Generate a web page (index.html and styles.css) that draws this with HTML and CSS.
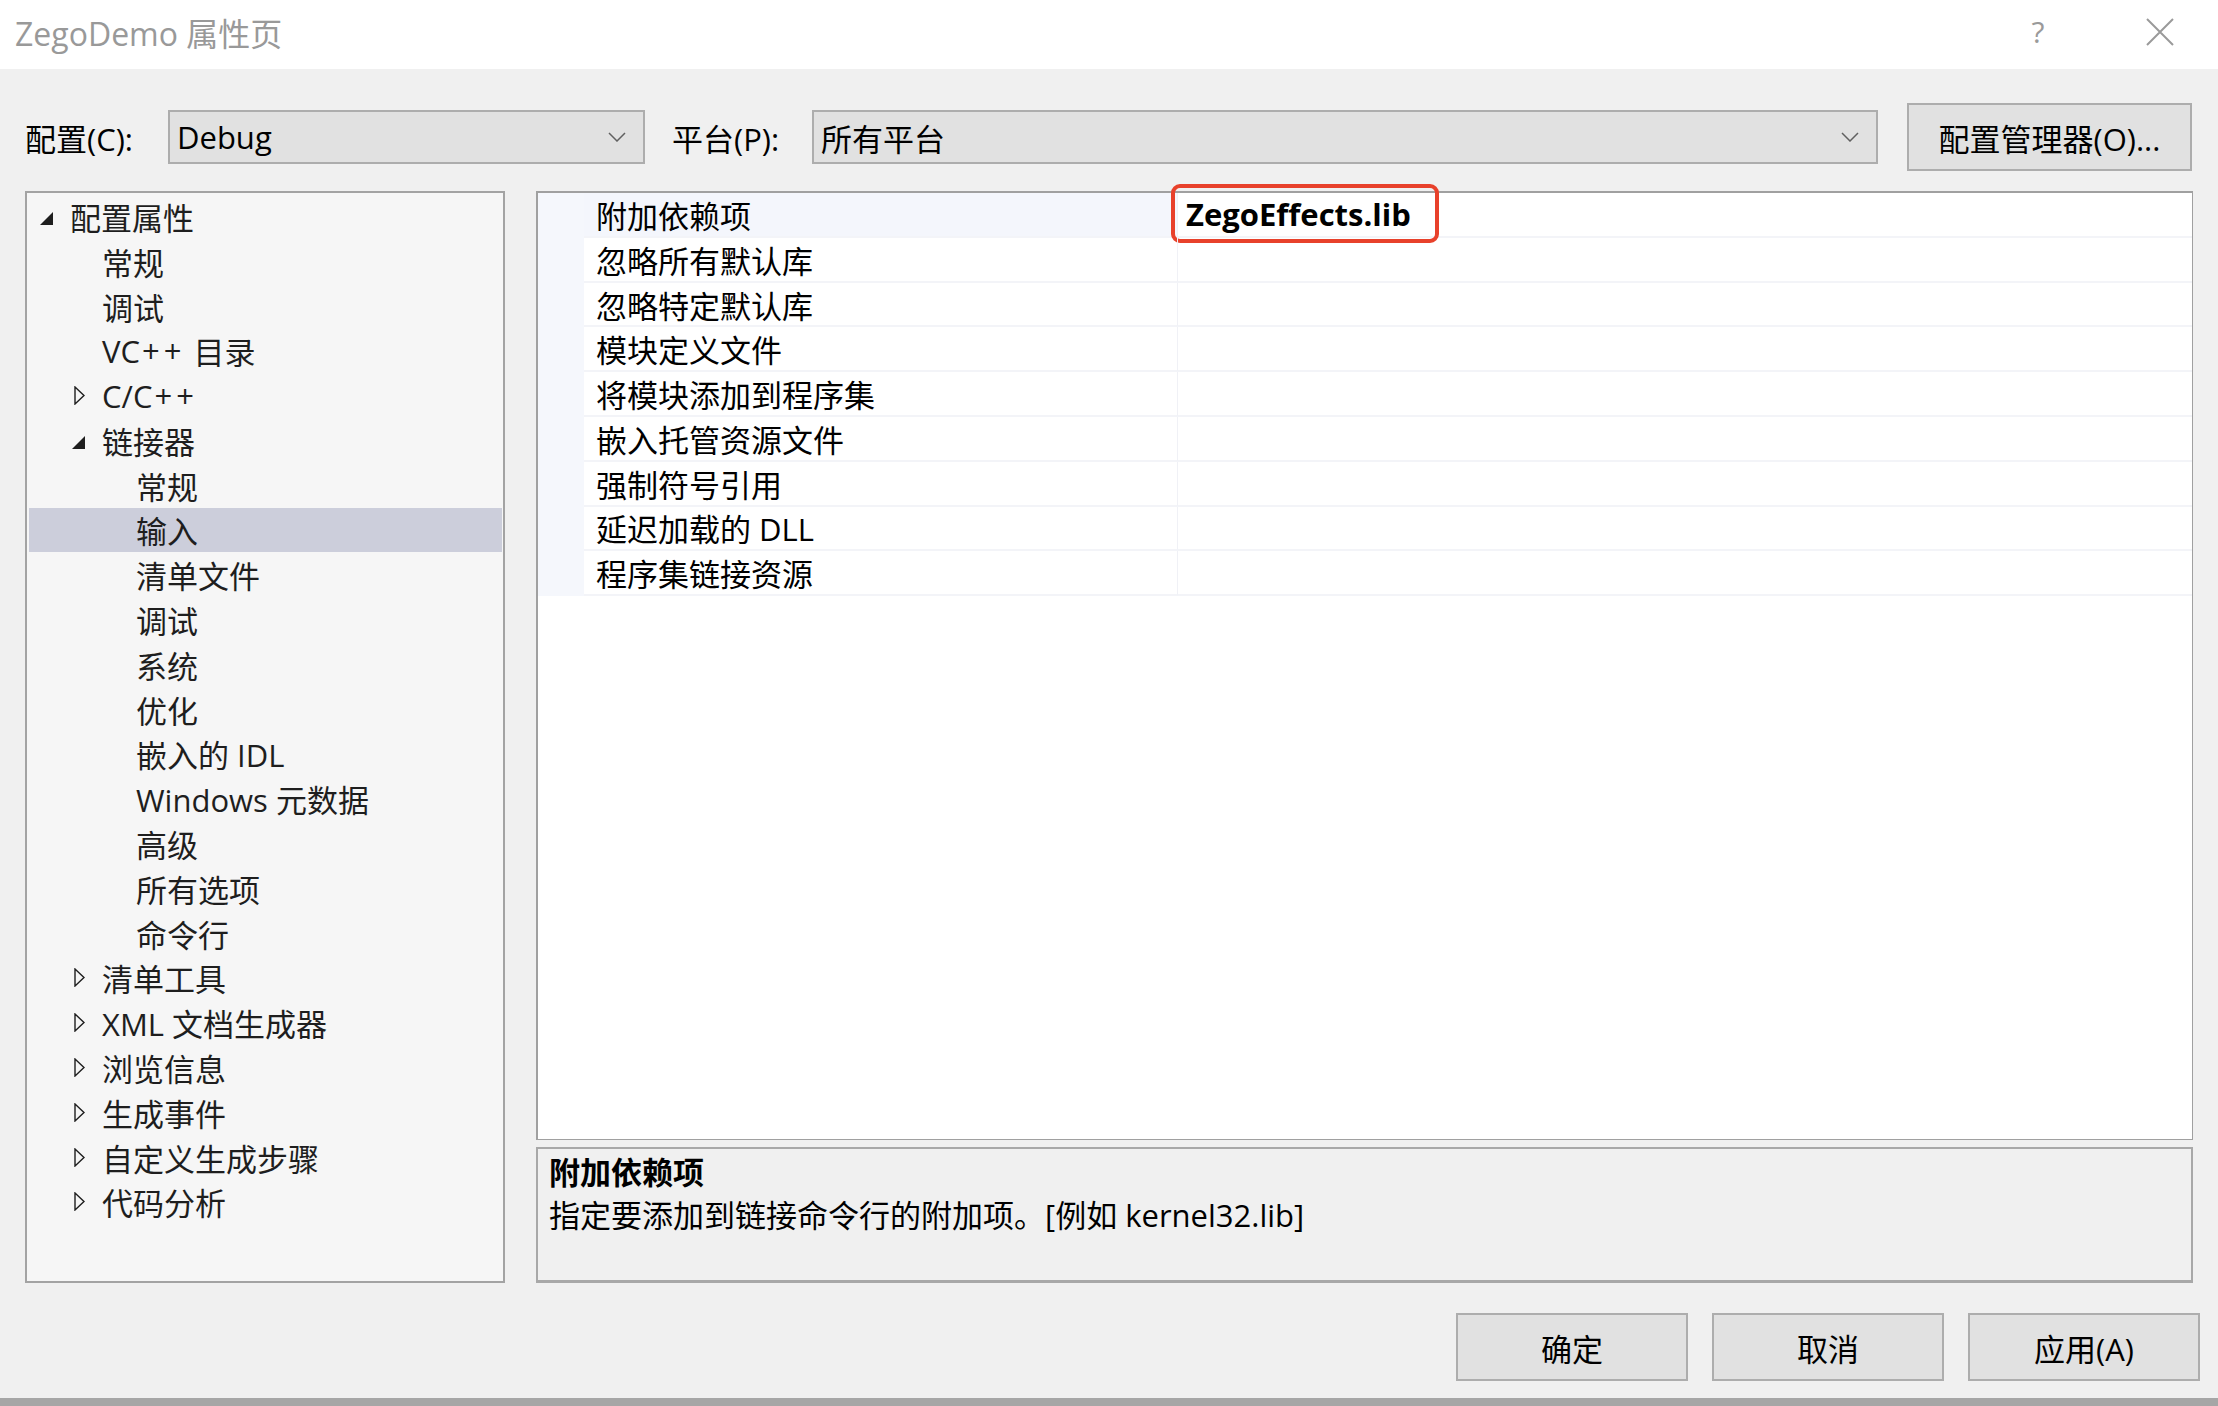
FILE: index.html
```html
<!DOCTYPE html>
<html lang="zh-cn">

<head>
    <meta charset="UTF-8">
    <meta name="viewport" content="width=device-width, initial-scale=1.0">
    <title>ZegoDemo 属性页</title>
    <link rel="stylesheet" href="styles.css">
</head>

<body>
    <div class="window">
        <!-- 标题栏 -->
        <div class="titlebar">
            <span class="title">ZegoDemo 属性页</span>
            <span class="help">?</span>
            <svg class="close" viewBox="0 0 28 28"><path d="M1 1L27 27M27 1L1 27" stroke="#9a9a9a" stroke-width="2" fill="none"/></svg>
        </div>

        <div class="body">
            <!-- 配置 / 平台 -->
            <div class="config-row">
                <span class="cfg-label">配置(C):</span>
                <div class="combo combo-config">
                    <span>Debug</span>
                    <svg class="chevron" viewBox="0 0 18 10"><path d="M1 1L9 9L17 1" stroke="#606060" stroke-width="1.5" fill="none"/></svg>
                </div>
                <span class="cfg-label cfg-platform">平台(P):</span>
                <div class="combo combo-platform">
                    <span>所有平台</span>
                    <svg class="chevron" viewBox="0 0 18 10"><path d="M1 1L9 9L17 1" stroke="#606060" stroke-width="1.5" fill="none"/></svg>
                </div>
                <div class="btn btn-manager">配置管理器(O)...</div>
            </div>

            <div class="content">
                <!-- 左侧树 -->
                <div class="tree">
                    <div class="tree-row lv0"><span class="arrow"><svg class="open" viewBox="0 0 13 13"><path d="M13 0V13H0Z" fill="#1e1e1e"/></svg></span>配置属性</div>
                    <div class="tree-row lv1"><span class="arrow"></span>常规</div>
                    <div class="tree-row lv1"><span class="arrow"></span>调试</div>
                    <div class="tree-row lv1"><span class="arrow"></span>VC<span class="pp">++</span>&nbsp;目录</div>
                    <div class="tree-row lv1"><span class="arrow"><svg class="shut" viewBox="0 0 11 19"><path d="M1 1L10 9.5L1 18Z" stroke="#1e1e1e" stroke-width="1.4" fill="none"/></svg></span>C/C<span class="pp">++</span></div>
                    <div class="tree-row lv1"><span class="arrow"><svg class="open" viewBox="0 0 13 13"><path d="M13 0V13H0Z" fill="#1e1e1e"/></svg></span>链接器</div>
                    <div class="tree-row lv2"><span class="arrow"></span>常规</div>
                    <div class="tree-row lv2 selected"><span class="arrow"></span>输入</div>
                    <div class="tree-row lv2"><span class="arrow"></span>清单文件</div>
                    <div class="tree-row lv2"><span class="arrow"></span>调试</div>
                    <div class="tree-row lv2"><span class="arrow"></span>系统</div>
                    <div class="tree-row lv2"><span class="arrow"></span>优化</div>
                    <div class="tree-row lv2"><span class="arrow"></span>嵌入的 IDL</div>
                    <div class="tree-row lv2"><span class="arrow"></span>Windows 元数据</div>
                    <div class="tree-row lv2"><span class="arrow"></span>高级</div>
                    <div class="tree-row lv2"><span class="arrow"></span>所有选项</div>
                    <div class="tree-row lv2"><span class="arrow"></span>命令行</div>
                    <div class="tree-row lv1"><span class="arrow"><svg class="shut" viewBox="0 0 11 19"><path d="M1 1L10 9.5L1 18Z" stroke="#1e1e1e" stroke-width="1.4" fill="none"/></svg></span>清单工具</div>
                    <div class="tree-row lv1"><span class="arrow"><svg class="shut" viewBox="0 0 11 19"><path d="M1 1L10 9.5L1 18Z" stroke="#1e1e1e" stroke-width="1.4" fill="none"/></svg></span>XML 文档生成器</div>
                    <div class="tree-row lv1"><span class="arrow"><svg class="shut" viewBox="0 0 11 19"><path d="M1 1L10 9.5L1 18Z" stroke="#1e1e1e" stroke-width="1.4" fill="none"/></svg></span>浏览信息</div>
                    <div class="tree-row lv1"><span class="arrow"><svg class="shut" viewBox="0 0 11 19"><path d="M1 1L10 9.5L1 18Z" stroke="#1e1e1e" stroke-width="1.4" fill="none"/></svg></span>生成事件</div>
                    <div class="tree-row lv1"><span class="arrow"><svg class="shut" viewBox="0 0 11 19"><path d="M1 1L10 9.5L1 18Z" stroke="#1e1e1e" stroke-width="1.4" fill="none"/></svg></span>自定义生成步骤</div>
                    <div class="tree-row lv1"><span class="arrow"><svg class="shut" viewBox="0 0 11 19"><path d="M1 1L10 9.5L1 18Z" stroke="#1e1e1e" stroke-width="1.4" fill="none"/></svg></span>代码分析</div>
                </div>

                <div class="right">
                    <!-- 属性表格 -->
                    <div class="grid">
                        <div class="grid-row current">
                            <div class="gutter"></div>
                            <div class="prop-name">附加依赖项</div>
                            <div class="prop-value"><b>ZegoEffects.lib</b><span class="mark"></span></div>
                        </div>
                        <div class="grid-row">
                            <div class="gutter"></div>
                            <div class="prop-name">忽略所有默认库</div>
                            <div class="prop-value"></div>
                        </div>
                        <div class="grid-row">
                            <div class="gutter"></div>
                            <div class="prop-name">忽略特定默认库</div>
                            <div class="prop-value"></div>
                        </div>
                        <div class="grid-row">
                            <div class="gutter"></div>
                            <div class="prop-name">模块定义文件</div>
                            <div class="prop-value"></div>
                        </div>
                        <div class="grid-row">
                            <div class="gutter"></div>
                            <div class="prop-name">将模块添加到程序集</div>
                            <div class="prop-value"></div>
                        </div>
                        <div class="grid-row">
                            <div class="gutter"></div>
                            <div class="prop-name">嵌入托管资源文件</div>
                            <div class="prop-value"></div>
                        </div>
                        <div class="grid-row">
                            <div class="gutter"></div>
                            <div class="prop-name">强制符号引用</div>
                            <div class="prop-value"></div>
                        </div>
                        <div class="grid-row">
                            <div class="gutter"></div>
                            <div class="prop-name">延迟加载的 DLL</div>
                            <div class="prop-value"></div>
                        </div>
                        <div class="grid-row">
                            <div class="gutter"></div>
                            <div class="prop-name">程序集链接资源</div>
                            <div class="prop-value"></div>
                        </div>
                    </div>

                    <!-- 说明 -->
                    <div class="desc">
                        <div class="desc-title">附加依赖项</div>
                        <div class="desc-text">指定要添加到链接命令行的附加项。[例如 kernel32.lib]</div>
                    </div>
                </div>
            </div>

            <div class="actions">
                <div class="btn btn-action">确定</div>
                <div class="btn btn-action">取消</div>
                <div class="btn btn-action">应用(A)</div>
            </div>
        </div>

        <div class="bottom-strip"></div>
    </div>
</body>

</html>
```

FILE: styles.css
```css
/* 初始化 */

html,
body {
    margin: 0;
    padding: 0;
}

body {
    font-family: "Open Sans", "Noto Sans CJK SC", sans-serif;
    font-size: 31px;
    color: #000;
}

.window {
    width: 2218px;
    height: 1406px;
    display: flex;
    flex-direction: column;
    background: #f0f0f0;
    overflow: hidden;
}
/* 标题栏 */

.titlebar {
    height: 69px;
    flex-shrink: 0;
    background: #fff;
    display: flex;
    align-items: center;
    padding: 0 44px 6px 15px;
    box-sizing: border-box;
}

.title {
    font-size: 32px;
    color: #999;
}

.help {
    margin-left: auto;
    width: 30px;
    text-align: center;
    font-size: 30px;
    color: #9a9a9a;
}

.close {
    width: 28px;
    height: 28px;
    margin-left: 93px;
}
/* 主体 */

.body {
    flex: 1;
    padding: 34px 25px 0 25px;
}

.config-row {
    height: 68px;
    display: flex;
    align-items: center;
}

.cfg-label {
    width: 143px;
    flex-shrink: 0;
}

.cfg-platform {
    width: 140px;
    margin-left: 27px;
}

.combo {
    height: 54px;
    box-sizing: border-box;
    border: 2px solid #adadad;
    background: #e1e1e1;
    display: flex;
    align-items: center;
    padding: 0 17px 0 7px;
}

.combo span {
    flex: 1;
}

.combo-config {
    width: 477px;
}

.combo-platform {
    width: 1066px;
}

.chevron {
    width: 18px;
    height: 10px;
}

.btn {
    box-sizing: border-box;
    border: 2px solid #adadad;
    background: #e1e1e1;
    display: flex;
    align-items: center;
    justify-content: center;
}

.btn-manager {
    width: 285px;
    height: 68px;
    margin-left: 29px;
}

.content {
    display: flex;
    margin-top: 20px;
    height: 1092px;
}
/* 左侧树 */

.tree {
    width: 480px;
    flex-shrink: 0;
    box-sizing: border-box;
    border: 2px solid #a3a3a3;
    background: #f6f6f6;
    padding-top: 1px;
    color: #1e1e1e;
}

.tree-row {
    height: 44.8px;
    display: flex;
    align-items: center;
    white-space: nowrap;
}

.tree-row .arrow {
    width: 30px;
    flex-shrink: 0;
    display: flex;
    align-items: center;
}

.pp {
    letter-spacing: 4px;
    margin-left: 2px;
}

.arrow .open {
    width: 13px;
    height: 13px;
    margin-top: 4px;
}

.arrow .shut {
    width: 11px;
    height: 19px;
    margin-left: 2px;
}

.lv0 {
    padding-left: 13px;
}

.lv1 {
    padding-left: 45px;
}

.lv2 {
    padding-left: 79px;
}

.tree-row.selected {
    background: #cccedb;
    margin: 0 1px 0 2px;
    padding-left: 77px;
}
/* 右侧 */

.right {
    width: 1657px;
    margin-left: 31px;
    display: flex;
    flex-direction: column;
}

.grid {
    height: 949px;
    box-sizing: border-box;
    border: 2px solid #a0a0a0;
    border-right-width: 1px;
    border-bottom-width: 1px;
    background: #fff;
}

.grid-row {
    height: 44.8px;
    display: flex;
}

.gutter {
    width: 46px;
    flex-shrink: 0;
    background: #f5f7fc;
}

.prop-name {
    width: 593px;
    flex-shrink: 0;
    box-sizing: border-box;
    padding-left: 12px;
    display: flex;
    align-items: center;
    border-bottom: 2px solid #f3f4f8;
    white-space: nowrap;
}

.prop-value {
    flex: 1;
    position: relative;
    display: flex;
    align-items: center;
    padding-left: 8px;
    border-left: 1px solid #f0f1f6;
    border-bottom: 2px solid #f3f4f8;
}

.grid-row.current .prop-name {
    background: #f4f6fc;
}

.prop-value b {
    font-weight: 700;
}
/* 红框标记 */

.mark {
    position: absolute;
    left: -7px;
    top: -9px;
    width: 268px;
    height: 59px;
    box-sizing: border-box;
    border: 4px solid #e8412b;
    border-radius: 9px;
}

.desc {
    margin-top: 7px;
    flex: 1;
    box-sizing: border-box;
    border: 2px solid #a8a8a8;
    border-bottom-width: 3px;
    background: #f0f0f0;
    padding: 2px 11px 0 11px;
    line-height: 43px;
}

.desc-title {
    font-weight: 700;
}
/* 底部按钮 */

.actions {
    display: flex;
    justify-content: flex-end;
    gap: 24px;
    margin-top: 30px;
    margin-right: -7px;
}

.btn-action {
    width: 232px;
    height: 68px;
}

.bottom-strip {
    height: 8px;
    flex-shrink: 0;
    background: #a6a6a6;
}
```
